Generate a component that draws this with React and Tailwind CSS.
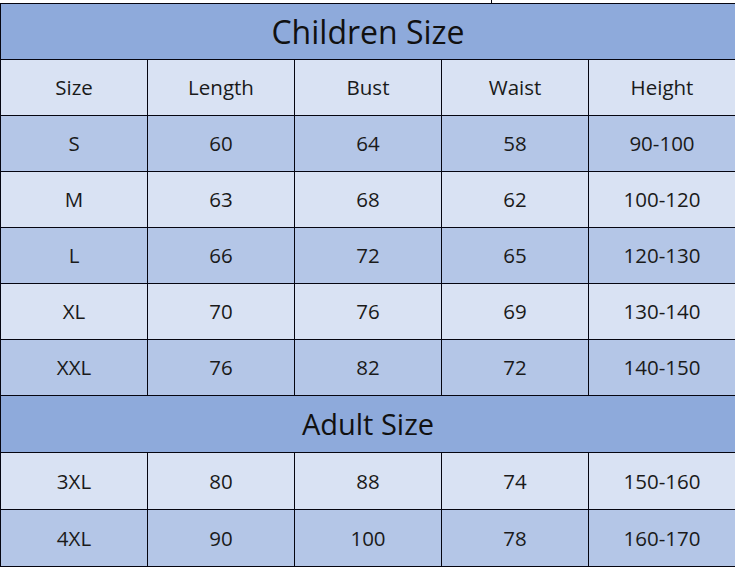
import React from 'react';

const columns = ['Size', 'Length', 'Bust', 'Waist', 'Height'];

const childRows = [
  ['S', '60', '64', '58', '90-100'],
  ['M', '63', '68', '62', '100-120'],
  ['L', '66', '72', '65', '120-130'],
  ['XL', '70', '76', '69', '130-140'],
  ['XXL', '76', '82', '72', '140-150'],
];

const adultRows = [
  ['3XL', '80', '88', '74', '150-160'],
  ['4XL', '90', '100', '78', '160-170'],
];

const Row = ({ cells, dark, tall }) => (
  <div
    className={`flex border-b border-[#050510] ${tall ? 'h-[57px]' : 'h-[56px]'} ${
      dark ? 'bg-[#b4c6e7]' : 'bg-[#d9e2f3]'
    }`}
  >
    {cells.map((c, i) => (
      <div
        key={i}
        className={`flex items-center justify-center text-[20.5px] text-[#1a1a1a] ${
          i < 4 ? 'w-[147px] border-r border-[#050510]' : 'flex-1'
        }`}
      >
        {c}
      </div>
    ))}
  </div>
);

const Title = ({ children, tall }) => (
  <div
    className={`flex items-center justify-center border-b border-[#050510] bg-[#8eaadb] text-[#111] ${
      tall ? 'h-[57px] text-[29px]' : 'h-[56px] text-[32px]'
    }`}
  >
    {children}
  </div>
);

export default function App() {
  return (
    <div className="w-[735px] h-[568px] overflow-hidden bg-white" style={{ fontFamily: '"Open Sans", "Noto Sans", sans-serif' }}>
      <div className="h-[3px] flex">
        <div className="ml-[491px] w-px h-[3px] bg-[#050510]" />
      </div>
      <div className="border-t border-l border-[#050510]">
        <Title>Children Size</Title>
        <Row cells={columns} />
        {childRows.map((r, i) => (
          <Row key={r[0]} cells={r} dark={i % 2 === 0} />
        ))}
        <Title tall>Adult Size</Title>
        {adultRows.map((r, i) => (
          <Row key={r[0]} cells={r} dark={i % 2 === 1} tall />
        ))}
      </div>
    </div>
  );
}
